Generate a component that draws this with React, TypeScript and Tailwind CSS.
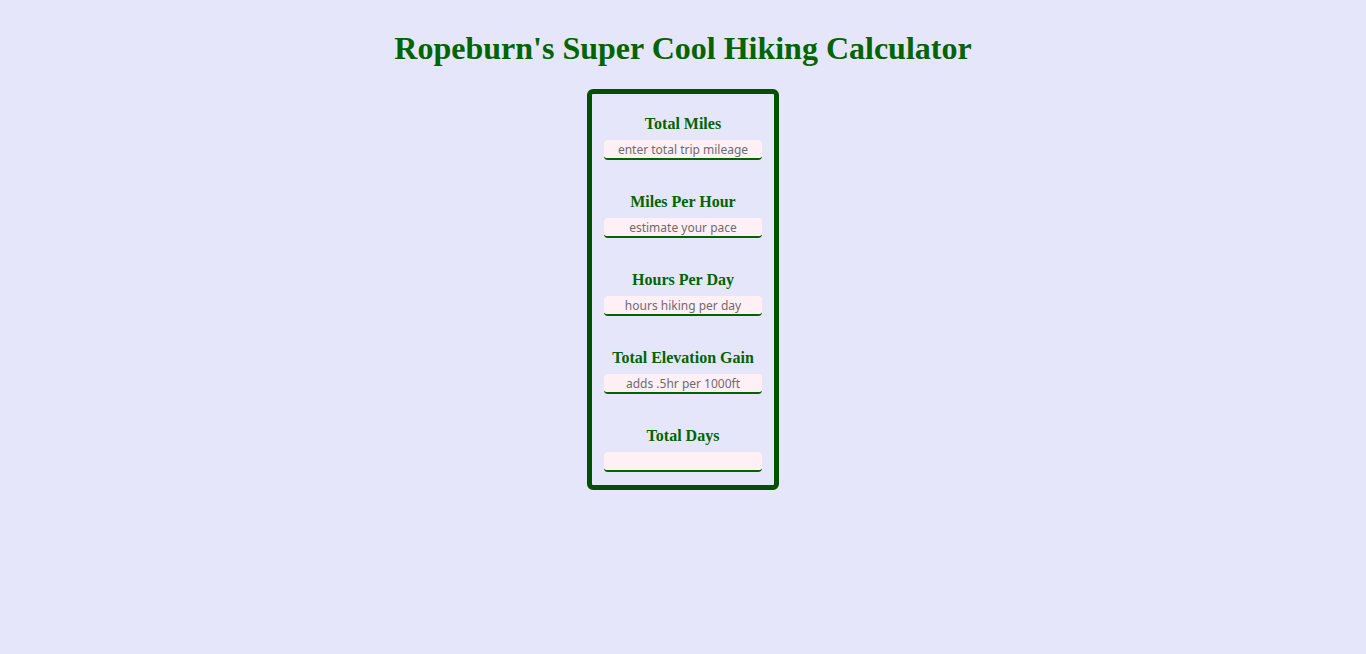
const fields = [
  { label: "Total Miles", placeholder: "enter total trip mileage" },
  { label: "Miles Per Hour", placeholder: "estimate your pace" },
  { label: "Hours Per Day", placeholder: "hours hiking per day" },
  { label: "Total Elevation Gain", placeholder: "adds .5hr per 1000ft" },
  { label: "Total Days", placeholder: "" },
];

export default function App() {
  return (
    <div className="min-h-screen bg-[#e6e6fa] pt-[30px] font-['Liberation_Serif',serif]">
      <h1 className="text-center text-[32px] font-bold leading-[37px] text-[#006400]">
        Ropeburn's Super Cool Hiking Calculator
      </h1>

      <div className="mx-auto mt-[22px] flex w-[192px] flex-col gap-[33px] rounded-[6px] border-[5px] border-[#005200] px-[12px] pt-[21px] pb-[13px]">
        {fields.map((f) => (
          <div key={f.label} className="flex flex-col items-center gap-[7px]">
            <label className="text-[16px] font-bold leading-[18px] text-[#006400]">{f.label}</label>
            <input
              type="text"
              placeholder={f.placeholder}
              className="h-[20px] w-[158px] rounded-[4px] border-b-2 border-[#006400] bg-[#fff0f5] text-center font-['Noto_Sans',sans-serif] text-[12px] leading-[18px] text-[#333] outline-none placeholder:text-[#6f6a70]"
            />
          </div>
        ))}
      </div>
    </div>
  );
}
